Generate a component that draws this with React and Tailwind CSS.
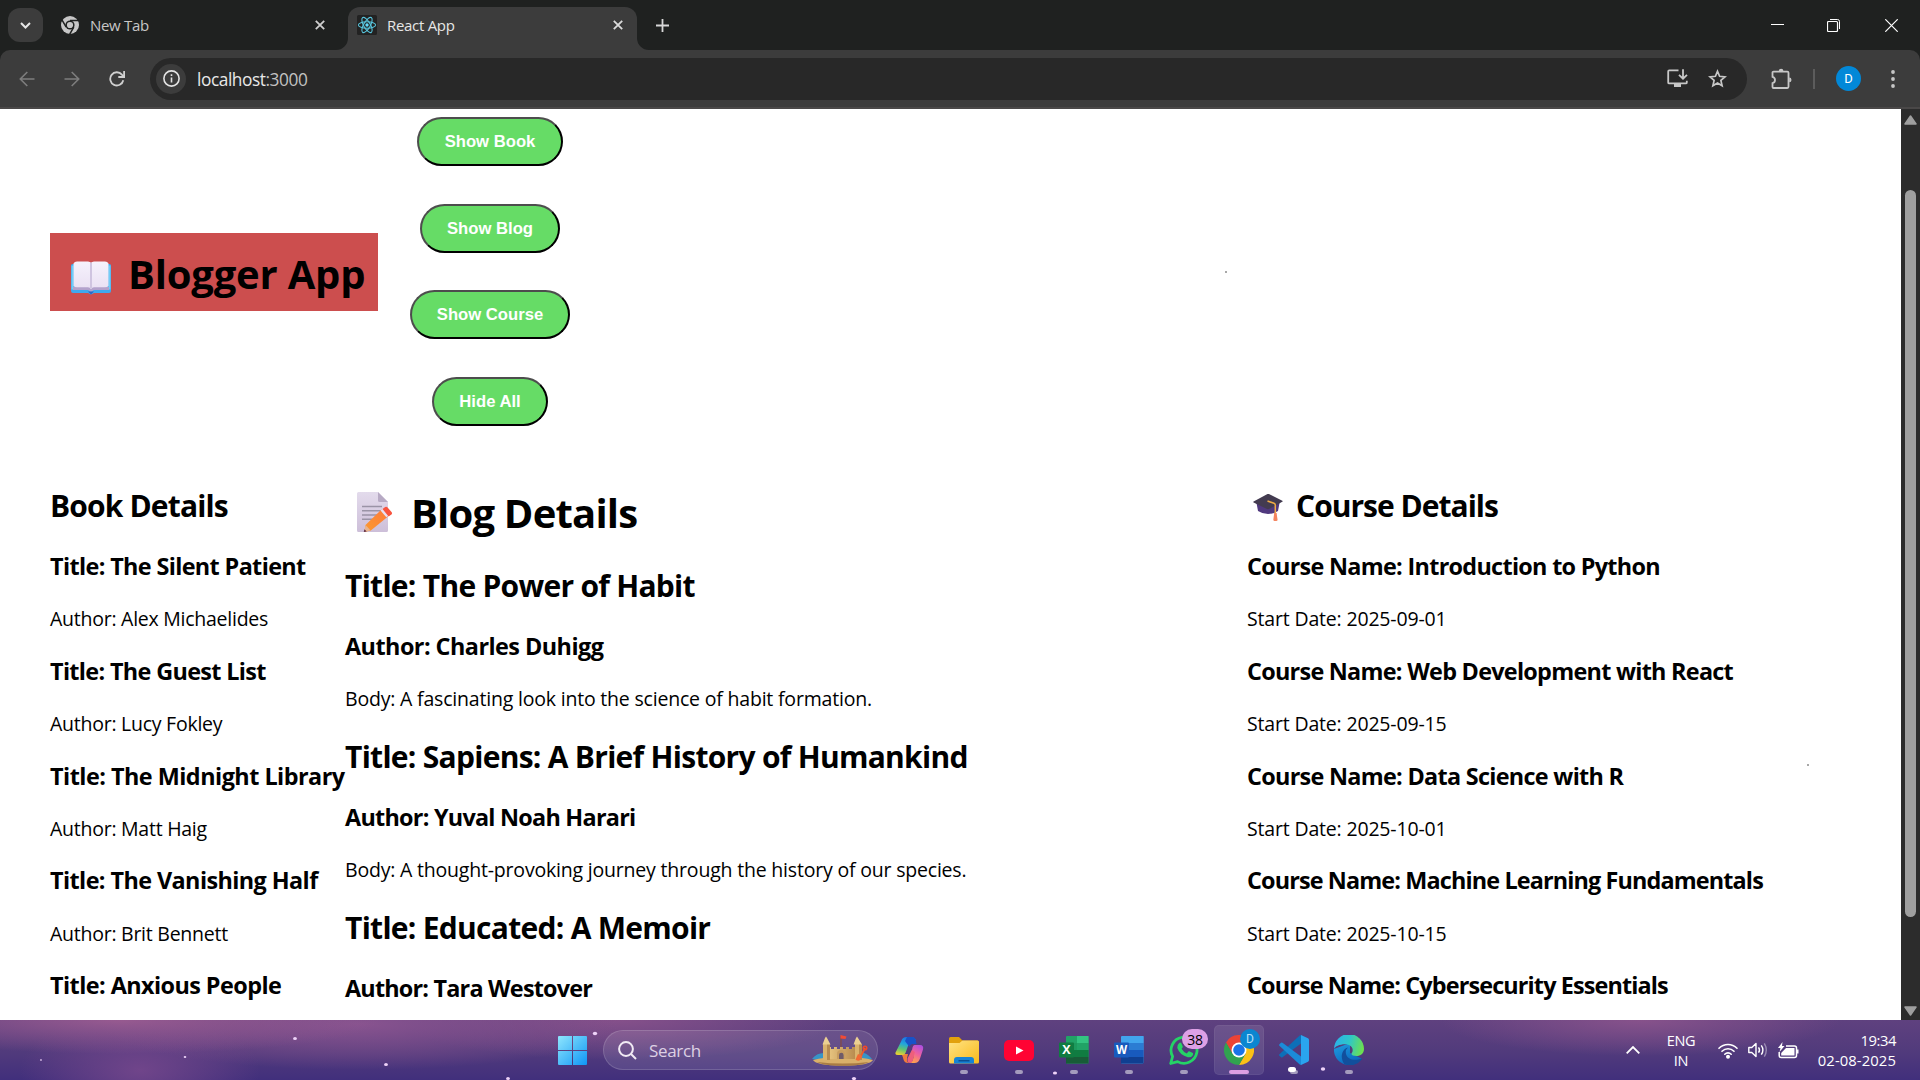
import React from 'react';

const books = [
  ['The Silent Patient', 'Alex Michaelides', 'tracking-[-0.027em]'],
  ['The Guest List', 'Lucy Fokley', 'tracking-[-0.028em]'],
  ['The Midnight Library', 'Matt Haig', 'tracking-[-0.022em]'],
  ['The Vanishing Half', 'Brit Bennett', 'tracking-[-0.025em]'],
  ['Anxious People', '', 'tracking-[-0.024em]'],
];

const blogs = [
  ['The Power of Habit', 'Charles Duhigg', 'A fascinating look into the science of habit formation.', 'tracking-[-0.023em]'],
  ['Sapiens: A Brief History of Humankind', 'Yuval Noah Harari', 'A thought-provoking journey through the history of our species.', 'tracking-[-0.032em]'],
  ['Educated: A Memoir', 'Tara Westover', '', 'tracking-[-0.034em]'],
];

const courses = [
  ['Introduction to Python', '2025-09-01', 'tracking-[-0.030em]'],
  ['Web Development with React', '2025-09-15', 'tracking-[-0.031em]'],
  ['Data Science with R', '2025-10-01', 'tracking-[-0.030em]'],
  ['Machine Learning Fundamentals', '2025-10-15', 'tracking-[-0.037em]'],
  ['Cybersecurity Essentials', '', 'tracking-[-0.037em]'],
];

/* ---------- browser icons ---------- */

function ChromeMono() {
  return (
    <svg className="h-[18px] w-[18px]" viewBox="0 0 18 18">
      <circle cx="9" cy="9" r="9" fill="#c7c7c7" />
      <circle cx="9" cy="9" r="4.6" fill="#1f2120" />
      <circle cx="9" cy="9" r="3.1" fill="#c7c7c7" />
      <path d="M9 4.6h8.2M5.2 11.2 1.1 4.2M12.8 11.2 8.700 18.2" stroke="#1f2120" strokeWidth="1.5" fill="none" />
    </svg>
  );
}

function ReactLogo() {
  return (
    <svg className="h-5 w-5" viewBox="0 0 20 20">
      <rect width="20" height="20" rx="1.5" fill="#222" />
      <g fill="none" stroke="#58c4dc" strokeWidth="1.1">
        <ellipse cx="10" cy="10" rx="8.6" ry="3.3" />
        <ellipse cx="10" cy="10" rx="8.6" ry="3.3" transform="rotate(60 10 10)" />
        <ellipse cx="10" cy="10" rx="8.6" ry="3.3" transform="rotate(120 10 10)" />
      </g>
      <circle cx="10" cy="10" r="1.7" fill="#61dafb" />
    </svg>
  );
}

function CloseX({ color = '#dcdcdc' }) {
  return (
    <svg className="h-[10px] w-[10px]" viewBox="0 0 10 10">
      <path d="M.8.8l8.4 8.4M9.2.8.8 9.2" stroke={color} strokeWidth="1.8" />
    </svg>
  );
}

function Arrow({ flip }) {
  return (
    <svg className={flip ? 'h-4 w-4 rotate-180' : 'h-4 w-4'} viewBox="0 0 16 16" fill="none" stroke="#7d7d7d" strokeWidth="1.6">
      <path d="M15.5 8H1.5M8.3 1 1.3 8l7 7" />
    </svg>
  );
}

function TabStrip() {
  return (
    <div className="flex h-[50px] items-end bg-[#1f2120] text-[15px] tracking-[-0.02em]">
      <div className="mb-2 ml-2 flex h-[34px] w-[35px] items-center justify-center rounded-[12px] bg-[#3c3c3c]">
        <svg className="h-[7px] w-[11px]" viewBox="0 0 11 7" fill="none" stroke="#e6e6e6" strokeWidth="2">
          <path d="M1 1l4.5 4.5L10 1" />
        </svg>
      </div>
      <div className="flex h-[50px] w-[305px] items-center pl-[18px]">
        <ChromeMono />
        <span className="ml-[11px] w-[225px] text-[#c7c7c7]">New Tab</span>
        <CloseX color="#cfcfcf" />
      </div>
      <div className="relative flex h-[43px] w-[289px] items-center rounded-t-[12px] bg-[#3c3c3c] pb-[7px] pl-[9px]">
        <svg className="absolute bottom-0 -left-3 h-3 w-3" viewBox="0 0 12 12"><path d="M12 0v12H0A12 12 0 0 0 12 0" fill="#3c3c3c" /></svg>
        <svg className="absolute -right-3 bottom-0 h-3 w-3" viewBox="0 0 12 12"><path d="M0 0v12h12A12 12 0 0 1 0 0" fill="#3c3c3c" /></svg>
        <ReactLogo />
        <span className="ml-[10px] w-[226px] text-[#e6e6e6]">React App</span>
        <CloseX />
      </div>
      <svg className="mb-[18px] ml-[19px] h-[13px] w-[13px]" viewBox="0 0 13 13"><path d="M6.5 0v13M0 6.5h13" stroke="#d8d8d8" strokeWidth="1.8" /></svg>
      <div className="mr-[22px] ml-auto flex h-[50px] items-center gap-[44px]">
        <svg className="h-[13px] w-[13px]" viewBox="0 0 13 13"><path d="M0 5.5h13" stroke="#fff" /></svg>
        <svg className="-ml-[1px] mr-[1px] h-[13px] w-[13px]" viewBox="0 0 13 13" fill="none" stroke="#fff"><rect x=".5" y="2.5" width="10" height="10" rx="1" strokeWidth="1.2" /><path d="M3 .5h7.5a2 2 0 0 1 2 2V10" /></svg>
        <svg className="h-[13px] w-[13px]" viewBox="0 0 13 13"><path d="M.3.3l12.4 12.4M12.7.3.3 12.7" stroke="#fff" strokeWidth="1.2" /></svg>
      </div>
    </div>
  );
}

function Toolbar() {
  return (
    <div className="bg-[#1f2120]">
      <div className="flex h-[59px] items-center rounded-t-[10px] border-b-2 border-[#4a4848] bg-[#3c3c3c] pl-[19px]">
        <Arrow />
        <div className="ml-[29px]"><Arrow flip /></div>
        <svg className="ml-[29px] h-4 w-4" viewBox="0 0 16 16" fill="none" stroke="#d0d0d0" strokeWidth="1.8">
          <path d="M14.3 9.3A6.6 6.6 0 1 1 12.9 3.6L15 5.8" />
          <path d="M15.1 0v6H9.3" />
        </svg>
        <div className="ml-[25px] flex h-[42px] w-[1597px] items-center rounded-full bg-[#282828] pr-5 pl-[6px]">
          <div className="flex h-[30px] w-[30px] items-center justify-center rounded-full bg-[#3c3c3c]">
            <svg className="h-[17px] w-[17px]" viewBox="0 0 17 17" fill="none" stroke="#e3e3e3" strokeWidth="1.6">
              <circle cx="8.5" cy="8.5" r="7.6" /><path d="M8.5 7.6v5M8.5 4.3v1.8" />
            </svg>
          </div>
          <span className="mt-[2px] ml-[11px] text-[17.3px] tracking-[-0.025em] text-[#e8e8e8]">localhost<span className="text-[#c2c2c2]">:3000</span></span>
          <svg className="ml-auto h-[19px] w-[21px]" viewBox="0 0 21 19" fill="none" stroke="#c7c7c7" strokeWidth="1.8">
            <path d="M11.5 1.4H2.2a1 1 0 0 0-1 1v11a1 1 0 0 0 1 1h16.6a1 1 0 0 0 1-1v-1.7" />
            <path d="M16 .3v9M12 5.8l4 3.9 4-3.9" />
            <path d="M7 15h7v3H7z" fill="#c7c7c7" stroke="none" />
          </svg>
          <svg className="ml-[20px] h-[19px] w-[19px]" viewBox="0 0 19 19" fill="none" stroke="#c7c7c7" strokeWidth="1.7">
            <path d="M9.5 2.3l2.1 5 5.4.5-4.1 3.6 1.2 5.3-4.6-2.8-4.6 2.8 1.2-5.3L2 7.8l5.4-.5z" />
          </svg>
        </div>
        <svg className="ml-[24px] h-[22px] w-[22px]" viewBox="0 0 22 22" fill="none" stroke="#c7c7c7" strokeWidth="1.8">
          <path d="M2.5 3.6h13.8a1.2 1.2 0 0 1 1.2 1.2v14a1.2 1.2 0 0 1-1.2 1.2H2.5a1 1 0 0 1-1-1v-3.800a3.3 3.3 0 0 0 0-6.400V4.6a1 1 0 0 1 1-1z" />
          <path d="M7.800 3a2.3 2.3 0 0 1 4.6 0zM18.2 9.6a2.3 2.3 0 0 1 0 4.6z" fill="#c7c7c7" stroke="none" />
        </svg>
        <div className="ml-[20px] h-5 w-[2px] bg-[#5c5c5c]" />
        <div className="ml-[21px] flex h-[25px] w-[25px] items-center justify-center rounded-full bg-[#0288d8] font-[Roboto] text-[13px] text-white">D</div>
        <svg className="ml-[30px] h-[18px] w-1" viewBox="0 0 4 18" fill="#c7c7c7"><circle cx="2" cy="2" r="1.9" /><circle cx="2" cy="9" r="1.9" /><circle cx="2" cy="16" r="1.9" /></svg>
      </div>
    </div>
  );
}

/* ---------- page emoji ---------- */

function OpenBook() {
  return (
    <svg className="h-[34px] w-[40px] shrink-0" viewBox="0 0 40 34">
      <defs>
        <linearGradient id="pg" x1="0" y1="0" x2="0" y2="1"><stop offset="0" stopColor="#f6f2fc" /><stop offset="1" stopColor="#e9e0f3" /></linearGradient>
      </defs>
      <path d="M0 4.500a1.500 1.500 0 0 1 1.500-1.500h37a1.500 1.500 0 0 1 1.500 1.500V30a2 2 0 0 1-2 2H23l-3 1.500-3-1.500H2a2 2 0 0 1-2-2z" fill="#3fa9ee" />
      <path d="M.5 4.500h2v24h-2zM37.500 4.500h2v24h-2z" fill="#74cdf6" />
      <path d="M2 26h36v3H23l-3 2-3-2H2z" fill="#b3a2cc" />
      <path d="M17 30.500h6L20 33.500z" fill="#2e66c4" />
      <path d="M2.500 2.500Q3.500.5 6 .5h11q2.200 0 3 1.600Q20.800.5 23 .5h11q2.500 0 3.500 2V25q-1 1.300-3.500 1.300H23q-2 0-3 2-1-2-3-2H6q-2.500 0-3.500-1.300z" fill="url(#pg)" />
      <path d="M19 1.500h2v26h-2z" fill="#cfc4e0" />
    </svg>
  );
}

function Memo() {
  return (
    <svg className="h-[40px] w-[36px] shrink-0" viewBox="0 0 36 40">
      <defs>
        <linearGradient id="paper" x1="0" y1="0" x2="0" y2="1"><stop offset="0" stopColor="#e3dbec" /><stop offset="1" stopColor="#cdbfd9" /></linearGradient>
        <linearGradient id="pencil" x1="1" y1="0" x2="0" y2="1"><stop offset="0" stopColor="#fd7a3c" /><stop offset="1" stopColor="#fb9a2f" /></linearGradient>
      </defs>
      <path d="M1.500 0H21l10 10v28.500a1.500 1.500 0 0 1-1.500 1.500h-28A1.500 1.500 0 0 1 0 38.500v-37A1.500 1.500 0 0 1 1.500 0z" fill="url(#paper)" />
      <path d="M21 0l10 10h-8.500A1.500 1.500 0 0 1 21 8.500z" fill="#b7aac4" />
      <path d="M5 14.500h20M5 18.700h19M5 23h15M5 27.300h11" stroke="#9a93a6" strokeWidth="1.400" />
      <path d="M8.500 33 24.500 17.500l6.500 7L13.500 38.700l-6 1z" fill="url(#pencil)" />
      <path d="M8.500 33l5.200 5.500L7 40z" fill="#e8b490" /><path d="M7.400 37.300L9.700 39.500 6.800 40z" fill="#5b2b45" />
      <path d="M23.500 18.500l2.500-2 5.500 7-2.200 1.800z" fill="#e9dff2" />
      <path d="M25.500 17l2.700-2q1.200-.8 2.200.3l4.300 5q.8 1.200-.3 2.200l-2.800 2z" fill="#f8543f" />
    </svg>
  );
}

function GradCap() {
  return (
    <svg className="h-[28px] w-[30px] shrink-0" viewBox="0 0 30 28">
      <path d="M3.500 9h23l-1.500 8q-4.500 3-10 3T5 17z" fill="#50397e" />
      <path d="M14.500 0q.7-.2 1.400 0l13.400 6.800q.8.500 0 1L16.500 14.800q-1.500.8-3 0L.6 8.500q-.8-.6 0-1.100z" fill="#433b50" />
      <path d="M14.500 7l6.500 2.300q1.300.5 1.300 1.800V21" stroke="#efab45" strokeWidth="1.500" fill="none" />
      <path d="M21.200 19h2.400l1 7.200q-2.200 1.700-4.300 0z" fill="#f4845f" />
    </svg>
  );
}

/* ---------- web page ---------- */

const h1 = 'text-[40px] leading-[53px] font-bold';
const h2 = 'text-[30px] leading-[40px] font-bold';
const h3 = 'text-[23.4px] leading-[31px] font-bold';
const p = 'text-[19.5px] leading-[27px]';

function PageButton({ children, width }) {
  return (
    <button className={`${width} h-[49px] rounded-[25px] border-2 border-t-[#4d4d4d] border-r-black border-b-black border-l-[#4d4d4d] bg-[#66dc66] font-['Liberation_Sans'] text-[16.67px] font-bold text-white`}>
      {children}
    </button>
  );
}

function Page() {
  return (
    <main className="relative h-[911px] w-[1901px] overflow-hidden bg-white pt-2 pl-[50px] text-black">
      <span className="absolute top-[162px] left-[1225px] h-[2px] w-[2px] bg-[#a8a8a8]" />
      <span className="absolute top-[655px] left-[1807px] h-[2px] w-[2px] bg-[#a8a8a8]" />
      <header className="flex items-center">
        <h1 className={`${h1} flex h-[78px] w-[328px] items-center bg-[#cc4e4e] pl-[21px] whitespace-nowrap`}>
          <span className="mt-[12px]"><OpenBook /></span>
          <span className="mt-[3px] ml-[17px] tracking-[-0.005em]">Blogger App</span>
        </h1>
        <div className="ml-[32px] flex w-[160px] flex-col items-center gap-[37.700px]">
          <PageButton width="w-[146px]">Show Book</PageButton>
          <PageButton width="w-[140px]">Show Blog</PageButton>
          <PageButton width="w-[160px]">Show Course</PageButton>
          <PageButton width="w-[116px]">Hide All</PageButton>
        </div>
      </header>

      <div className="mt-[59.500px] flex items-start whitespace-nowrap">
        <section className="w-[295px]">
          <h2 className={`${h2} mb-[25.400px] tracking-[-0.028em]`}>Book Details</h2>
          {books.map(([title, author, track]) => (
            <article key={title} className="mb-[23.400px]">
              <h3 className={`${h3} ${track}`}>Title: {title}</h3>
              {author && <p className={`${p} mt-[23.400px] tracking-[-0.013em]`}>Author: {author}</p>}
            </article>
          ))}
        </section>
        <section className="w-[902px]">
          <h1 className={`${h1} mb-[2.300px] flex items-center pl-[12px]`}>
            <Memo />
            <span className="ml-[18px] tracking-[-0.020em]">Blog Details</span>
          </h1>
          {blogs.map(([title, author, body, track]) => (
            <article key={title} className="pt-[24.900px]">
              <h2 className={`${h2} tracking-[-0.024em]`}>Title: {title}</h2>
              <h3 className={`${h3} mt-[24.900px] ${track}`}>Author: {author}</h3>
              {body && <p className={`${p} mt-[23.400px] tracking-[-0.010em]`}>Body: {body}</p>}
            </article>
          ))}
        </section>
        <section>
          <h2 className={`${h2} mb-[25.400px] flex items-center pl-[6px] tracking-[-0.033em]`}>
            <span className="mt-[4px]"><GradCap /></span>
            <span className="ml-[13px]">Course Details</span>
          </h2>
          {courses.map(([name, date, track]) => (
            <article key={name} className="mb-[23.400px]">
              <h3 className={`${h3} ${track}`}>Course Name: {name}</h3>
              {date && <p className={`${p} mt-[23.400px] tracking-[-0.009em]`}>Start Date: {date}</p>}
            </article>
          ))}
        </section>
      </div>
    </main>
  );
}

function Scrollbar() {
  return (
    <div className="flex h-[911px] w-[19px] flex-col items-center bg-[#2c2c2c]">
      <svg className="mt-[6px] h-[10px] w-[13px]" viewBox="0 0 13 10"><path d="M6.500 1 12 9H1z" fill="#9f9f9f" stroke="#9f9f9f" strokeWidth="1.500" strokeLinejoin="round" /></svg>
      <div className="mt-[65px] h-[727px] w-[11px] rounded-full bg-[#9f9f9f]" />
      <svg className="mt-[89px] h-[10px] w-[13px]" viewBox="0 0 13 10"><path d="M6.500 9 12 1H1z" fill="#9f9f9f" stroke="#9f9f9f" strokeWidth="1.500" strokeLinejoin="round" /></svg>
    </div>
  );
}

/* ---------- taskbar ---------- */

function StartLogo() {
  return (
    <svg className="h-[29px] w-[29px]" viewBox="0 0 29 29">
      <defs><linearGradient id="win" x1="0" y1="0" x2="29" y2="29" gradientUnits="userSpaceOnUse"><stop offset="0" stopColor="#8fe6fd" /><stop offset="1" stopColor="#0f96f5" /></linearGradient></defs>
      <path d="M1 0h13v14H0V1a1 1 0 0 1 1-1zM15 0h13a1 1 0 0 1 1 1v13H15zM0 15h14v14H1a1 1 0 0 1-1-1zM15 15h14v13a1 1 0 0 1-1 1H15z" fill="url(#win)" />
    </svg>
  );
}

function Castle() {
  return (
    <svg className="h-[31px] w-[64px]" viewBox="0 0 64 31">
      <defs><linearGradient id="sand" x1="0" y1="0" x2="1" y2="0"><stop offset="0" stopColor="#e9c681" /><stop offset="1" stopColor="#b98c50" /></linearGradient></defs>
      <path d="M0 24q5-7 14-6v8zM45 17q9-1 15 7l-12 2z" fill="#3795c8" />
      <path d="M1 25q10-3 30-3t30 3q-3 5.500-30 5.500T1 25z" fill="#d9b06a" />
      <path d="M5 27q26 3 52 0-6 3.700-26 3.700T5 27z" fill="#a97c44" />
      <path d="M16 12h3v2h3v-2h3v2h3v-2h3v2h3v-2h3v2h3v-2h3v12H16z" fill="url(#sand)" />
      <path d="M11 9h7v16h-7zM43 9h7v16h-7z" fill="#dab36d" />
      <path d="M15 9h3v16h-3zM47 9h3v16h-3z" fill="#b78b50" />
      <path d="M10.500 9.500 13 3l1-1.500L15 3l3.500 6.500zM41.500 9.500 44 3l1-1.500L46 3l4 6.500z" fill="#ecd092" />
      <path d="M25 24v-5a4 4 0 0 1 8 0v5z" fill="#c89d5f" /><path d="M27 24v-4a2.300 2.300 0 0 1 4.600 0v4z" fill="#6f5b69" />
      <path d="M29 12V1" stroke="#8b4a35" strokeWidth="1" /><path d="M28.500 0l6 1.500-1 2.500-5-.5z" fill="#f04b36" />
      <path d="M53 13l-5 10" stroke="#ee5a2d" strokeWidth="1.800" /><path d="M46 19l4.500 2-3 4.500q-3 .5-4-1z" fill="#f26a34" /><circle cx="53" cy="13" r="1.800" fill="none" stroke="#ee4a2d" strokeWidth="1.500" />
    </svg>
  );
}

function Copilot() {
  return (
    <svg className="h-[28px] w-[30px]" viewBox="0 0 30 28">
      <defs>
        <linearGradient id="cpA" x1=".6" y1="0" x2=".3" y2="1"><stop offset="0" stopColor="#1a6fe6" /><stop offset=".4" stopColor="#22a5dc" /><stop offset=".7" stopColor="#5fc473" /><stop offset="1" stopColor="#e6cf35" /></linearGradient>
        <linearGradient id="cpB" x1=".7" y1="0" x2=".3" y2="1"><stop offset="0" stopColor="#b04fe0" /><stop offset=".5" stopColor="#f0629b" /><stop offset="1" stopColor="#ffa34c" /></linearGradient>
      </defs>
      <path d="M7 18h7l-1 4.500q-.8 4.500 4 4.500h-3q-3.500 0-4.500-3.500L8.800 21Q8.300 19 7 18z" fill="#f07a3c" />
      <path d="M12.500 1q-4 0-5.300 4.200L2.300 15Q-.2 19 4 19h4.500q2.300 0 3.200-2.500L15 7q1-3 4-3h3l-1-1Q20 1 17 1z" fill="url(#cpA)" />
      <path d="M13 1h5q3 0 3.800 3L22.500 8h-4q-2 0-2.700 2L15.400 11 11 5z" fill="#1852c8" />
      <path d="M20.500 9H26q4 0 3 4.500l-3 9Q24.500 27 20.500 27h-4.300q2-.8 2.700-3.500l.6-2.500-2-4 1-5.500Q19 9 20.500 9z" fill="url(#cpB)" />
      <path d="M17.800 14l-4.300 8.500Q12.800 27 16.500 27q2-.6 2.600-3.600L20.800 16z" fill="#ee5f7c" />
    </svg>
  );
}

function Folder() {
  return (
    <svg className="h-[27px] w-[30px]" viewBox="0 0 30 27">
      <defs><linearGradient id="fold" x1="0" y1="0" x2="1" y2="1"><stop offset="0" stopColor="#ffe384" /><stop offset="1" stopColor="#f9ba1a" /></linearGradient></defs>
      <path d="M0 1.500A1.500 1.500 0 0 1 1.500 0H10l3.500 3.500h15A1.500 1.500 0 0 1 30 5v10H0z" fill="#e2a10c" />
      <path d="M0 6h10.500l3-2.500h15A1.500 1.500 0 0 1 30 5v20a1.500 1.500 0 0 1-1.500 1.500h-27A1.500 1.500 0 0 1 0 25z" fill="url(#fold)" />
      <path d="M5 26.500V23q0-3 3-3h14q3 0 3 3v3.500z" fill="#1683d5" /><path d="M9.500 23h11v1.500h-11z" fill="#0b4f92" />
    </svg>
  );
}

function YouTube() {
  return (
    <svg className="h-[21px] w-[30px]" viewBox="0 0 30 21"><rect width="30" height="21" rx="5" fill="#ff0333" /><path d="M12 6.500v8l7.500-4z" fill="#fff" /></svg>
  );
}

function Office({ letter, c }) {
  return (
    <svg className="h-[28px] w-[30px]" viewBox="0 0 30 28">
      <rect x="7" width="22.500" height="27.500" rx="1" fill={c[0]} />
      <path d="M18 0h11.500v7H18z" fill={c[1]} /><path d="M7 7h11v7H7z" fill={c[2]} /><path d="M18 7h11.500v7H18z" fill={c[3]} />
      <path d="M7 14h22.500v7H7z" fill={c[4]} /><path d="M7 21h22.500v6.500H7z" fill={c[5]} />
      <rect y="6.500" width="15" height="15" rx="1" fill={c[6]} />
      <text x="7.500" y="18.200" textAnchor="middle" fontFamily="Open Sans" fontWeight="700" fontSize={letter === 'W' ? 11.5 : 12.5} fill="#fff">{letter}</text>
    </svg>
  );
}

function WhatsApp() {
  return (
    <svg className="h-[30px] w-[30px]" viewBox="0 0 30 30">
      <path d="M1.700 28.500l1.900-7A13 13 0 1 1 8.600 26.600z" fill="none" stroke="#25d366" strokeWidth="2.800" strokeLinejoin="round" />
      <path d="M10.200 8q1-.9 2 .1l1.600 3.400q.2.800-1.200 2.300 1.800 3.300 5.200 4.600l1.600-1.900q.6-.5 1.300-.1l3.200 1.600q.7.700-.2 2.500-1.800 2.400-4.900 1.700-7.900-1.800-10.500-9.100Q7.800 10 10.200 8z" fill="#25d366" />
    </svg>
  );
}

function ChromeColor() {
  return (
    <svg className="h-[30px] w-[30px]" viewBox="0 0 48 48">
      <path d="M24 12h20.800A24 24 0 0 1 24 48l10.400-18z" fill="#fbc116" />
      <path d="M13.600 30 3.200 12A24 24 0 0 1 44.800 12H24z" fill="#ea4335" />
      <path d="M34.400 30 24 48A24 24 0 0 1 3.200 12l10.400 18z" fill="#31a350" />
      <circle cx="24" cy="24" r="12" fill="#fff" /><circle cx="24" cy="24" r="9.300" fill="#1a73e8" />
    </svg>
  );
}

function VSCode() {
  return (
    <svg className="h-[30px] w-[30px]" viewBox="0 0 30 30">
      <path d="M22 0l7 3.300q1 .5 1 1.700v20q0 1.200-1 1.700L22 30z" fill="#2aa4ee" />
      <path d="M22 0v8.500L3.500 22.300q-.8.500-1.500 0L.4 20.700q-.7-.8 0-1.500L20.400.7Q21.300 0 22 0z" fill="#0d6fb8" />
      <path d="M22 30v-8.500L3.500 7.700q-.8-.5-1.500 0L.4 9.300q-.7.800 0 1.500l20 18.500q.9.700 1.600.7z" fill="#1b8bd8" />
    </svg>
  );
}

function Edge() {
  return (
    <svg className="h-[30px] w-[30px]" viewBox="0 0 30 30">
      <defs>
        <linearGradient id="edA" x1="0" y1=".3" x2="1" y2=".5"><stop offset="0" stopColor="#2bb0ea" /><stop offset=".5" stopColor="#2fc7c8" /><stop offset="1" stopColor="#6de04f" /></linearGradient>
        <linearGradient id="edB" x1="0" y1="0" x2=".6" y2="1"><stop offset="0" stopColor="#1f9ee0" /><stop offset="1" stopColor="#0b66bd" /></linearGradient>
      </defs>
      <path d="M0 14A15 15 0 0 0 15 30q8 0 12.500-6.500L16 18V8z" fill="url(#edB)" />
      <path d="M0 14A15 15 0 0 1 30 14c0 4.500-3.500 7-7.500 7-3 0-5-1-5-2.300 0-.8 1.200-1.300 1.200-3.700 0-3-3.200-5.700-7.700-5.700C5.500 9.300 1 11.500 0 14z" fill="url(#edA)" />
      <path d="M10.500 29.200C6 24 7 14.500 14 12.500q-3 2.500-2 6.500c1.300 5 8 7.500 15.500 4.500q.7.300.3 1A15 15 0 0 1 10.500 29.200z" fill="#124f9c" />
    </svg>
  );
}

function TaskItem({ children, dot = true, active, badge }) {
  return (
    <div className={`relative flex h-[50px] w-[50px] items-center justify-center rounded-[5px] ${active ? 'border border-white/5 bg-white/10' : ''}`}>
      {children}
      {badge}
      {dot && <span className={`absolute h-1 rounded-full ${active ? 'bottom-0 w-5 bg-[#dd9fe3]' : 'bottom-[1px] w-2 bg-[#a49bbd]'}`} />}
    </div>
  );
}

const stars = [[41, 40, .8], [185, 37, 1], [295, 18.600, 1.500], [386, 44.600, 1.500], [508, 58.500, 1.500], [595, 13.500, 1.700], [854, 58.500, 1.600], [1055, 53, 1.600], [1323, 49, 1.700]];

function Taskbar() {
  return (
    <footer className="relative flex h-[60px] items-center overflow-hidden bg-[radial-gradient(ellipse_260px_34px_at_120px_0px,#975a90_0%,transparent_100%),radial-gradient(ellipse_260px_46px_at_360px_4px,#88538f_0%,transparent_100%),radial-gradient(ellipse_120px_60px_at_140px_50px,#70458a_0%,transparent_100%),radial-gradient(ellipse_220px_40px_at_620px_0px,#85508a_0%,transparent_100%),radial-gradient(ellipse_200px_36px_at_1640px_0px,#87528b_0%,transparent_100%),linear-gradient(to_bottom,#5f417f,#523b7c_50%,#412f7c)] text-white">
      <svg className="absolute inset-0 h-[60px] w-[1920px]" viewBox="0 0 1920 60">
        {stars.map(([x, y, r]) => <ellipse key={x} cx={x} cy={y} rx={r * 1.300} ry={r} fill="#eed3f8" />)}
      </svg>
      <div className="relative ml-[558px]"><StartLogo /></div>
      <div className="relative ml-4 flex h-10 w-[275px] items-center rounded-full border border-white/15 bg-white/10 pr-0 pl-[14px]">
        <svg className="h-[19px] w-[19px]" viewBox="0 0 19 19" fill="none" stroke="#f1eaf4" strokeWidth="2"><circle cx="8" cy="8" r="6.900" /><path d="M13 13l5 5" /></svg>
        <span className="mt-[1px] ml-[12px] text-[17px] tracking-[-0.02em] text-[#ddd0e4]">Search</span>
        <span className="mr-[1px] ml-auto"><Castle /></span>
      </div>
      <div className="relative ml-[6px] flex gap-[5px]">
        <TaskItem dot={false}><Copilot /></TaskItem>
        <TaskItem><Folder /></TaskItem>
        <TaskItem><YouTube /></TaskItem>
        <TaskItem><Office letter="X" c={['#21a366', '#33c481', '#1d9a5d', '#21a366', '#107c41', '#185c37', '#107c41']} /></TaskItem>
        <TaskItem><Office letter="W" c={['#41a5ee', '#41a5ee', '#2b7cd3', '#2b7cd3', '#185abd', '#103f91', '#185abd']} /></TaskItem>
        <TaskItem badge={<span className="absolute top-1 left-[23px] flex h-5 w-[26px] items-center justify-center rounded-full bg-[#dda0e6] text-[14px] tracking-[-0.02em] text-black">38</span>}><WhatsApp /></TaskItem>
        <TaskItem active badge={<span className="absolute top-[3px] left-[25px] flex h-5 w-5 items-center justify-center rounded-full bg-[#0b86d0] font-[Roboto] text-[12px] text-[#b9e0f8]">D</span>}><ChromeColor /></TaskItem>
        <TaskItem badge={<span className="absolute bottom-[3px] left-[19px] z-10 h-[5px] w-[8px] rounded-full bg-white" />}><VSCode /></TaskItem>
        <TaskItem><Edge /></TaskItem>
      </div>
      <div className="relative mr-6 ml-auto flex items-center text-[14.500px] leading-5 tracking-[-0.02em]">
        <svg className="h-2 w-[14px]" viewBox="0 0 14 8" fill="none" stroke="#fff" strokeWidth="1.800"><path d="M.7 7.300 7 1l6.300 6.300" /></svg>
        <div className="mt-[1px] ml-[26px] w-[30px] text-center">ENG<br />IN</div>
        <svg className="ml-[22px] h-[17px] w-5" viewBox="0 0 20 17" fill="none" stroke="#fff" strokeWidth="1.600" strokeLinecap="round">
          <path d="M1 6.300a12.700 12.700 0 0 1 18 0M4 9.300a8.500 8.500 0 0 1 12 0M6.800 12.200a4.500 4.500 0 0 1 6.400 0" /><circle cx="10" cy="14.800" r="1.200" fill="#fff" />
        </svg>
        <svg className="ml-[10px] h-4 w-5" viewBox="0 0 20 16" fill="none" stroke="#fff" strokeWidth="1.400" strokeLinejoin="round">
          <path d="M.8 5.500h3L8 1.500v13l-4.200-4h-3z" /><path d="M10.500 5.300q2 2.700 0 5.400M13.300 3.300q3.200 4.700 0 9.400" /><path d="M16.300 1.300q4 6.700 0 13.400" opacity=".4" />
        </svg>
        <svg className="ml-[10px] h-[17px] w-[21px]" viewBox="0 0 21 17" fill="none" stroke="#fff" strokeWidth="1.500">
          <path d="M8 4h8.500a2 2 0 0 1 2 2v7.500a2 2 0 0 1-2 2H3.200a2 2 0 0 1-2-2V10" /><path d="M8 6h8.500v7.500H3.200V11z" fill="#fff" stroke="none" /><path d="M19 7.500h1.500v4H19z" fill="#fff" stroke="none" /><path d="M4.500 0 0 6h2.500L1.500 10 6.500 4H4z" fill="#fff" stroke="none" />
        </svg>
        <div className="ml-[18px] w-[79px] text-right text-[14.800px] tracking-[0.007em] whitespace-nowrap"><span className="tracking-[-0.03em]">19:34</span><br />02-08-2025</div>
      </div>
    </footer>
  );
}

export default function App() {
  return (
    <div className="h-[1080px] w-[1920px] overflow-hidden bg-white font-['Open_Sans',sans-serif]">
      <TabStrip />
      <Toolbar />
      <div className="flex">
        <Page />
        <Scrollbar />
      </div>
      <Taskbar />
    </div>
  );
}
